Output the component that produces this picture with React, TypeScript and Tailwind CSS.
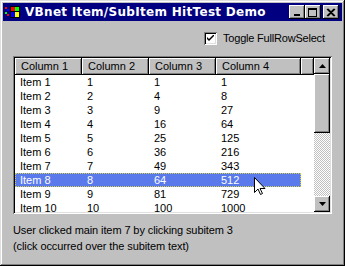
const ROWS = Array.from({ length: 10 }, (_, i) => {
  const n = i + 1
  return [`Item ${n}`, String(n), String(n * n), String(n * n * n)]
})

const COLS = ['Column 1', 'Column 2', 'Column 3', 'Column 4']
const COL_W = ['w-[67px]', 'w-[67px]', 'w-[67px]', 'w-[85px]']

const RAISED =
  'shadow-[inset_-1px_-1px_0_#000,inset_1px_1px_0_#fff,inset_-2px_-2px_0_#808080]'

function TitleIcon() {
  return (
    <svg width="16" height="14" viewBox="0 0 16 14" className="shrink-0">
      <rect x="0" y="2" width="2" height="2" fill="#ff0000" />
      <rect x="2" y="4" width="2" height="2" fill="#0000ff" />
      <rect x="0" y="7" width="2" height="2" fill="#00ff00" />
      <rect x="2" y="9" width="2" height="2" fill="#ff0000" />
      <rect x="5" y="1" width="10" height="12" fill="#000" />
      <rect x="6" y="2" width="4" height="4" fill="#ff0000" />
      <rect x="10" y="2" width="4" height="4" fill="#00ff00" />
      <rect x="6" y="7" width="4" height="5" fill="#0000ff" />
      <rect x="10" y="7" width="4" height="5" fill="#ffff00" />
    </svg>
  )
}

function TitleButton({ kind }: { kind: 'min' | 'max' | 'close' }) {
  return (
    <div className={`w-[16px] h-[14px] bg-[#c0c0c0] ${RAISED} flex items-center justify-center`}>
      <svg width="10" height="9" viewBox="0 0 10 9">
        {kind === 'min' && <rect x="2" y="6" width="6" height="2" fill="#000" />}
        {kind === 'max' && (
          <>
            <rect x="0.5" y="0.5" width="8" height="8" fill="none" stroke="#000" />
            <rect x="0" y="0" width="9" height="2" fill="#000" />
          </>
        )}
        {kind === 'close' && (
          <path d="M1 1 L8 8 M2 1 L9 8 M8 1 L1 8 M9 1 L2 8" stroke="#000" strokeWidth="1.1" />
        )}
      </svg>
    </div>
  )
}

function ScrollButton({ up }: { up: boolean }) {
  return (
    <div className={`w-[16px] h-[16px] bg-[#c0c0c0] ${RAISED} flex items-center justify-center`}>
      <svg width="7" height="4" viewBox="0 0 7 4">
        {up ? <path d="M3.5 0 L7 4 L0 4 Z" fill="#000" /> : <path d="M0 0 L7 0 L3.5 4 Z" fill="#000" />}
      </svg>
    </div>
  )
}

function Cursor() {
  return (
    <svg
      width="12"
      height="19"
      viewBox="0 0 12 19"
      className="absolute left-[254px] top-[177px] pointer-events-none"
    >
      <path
        d="M0.5 0.5 L0.5 15.5 L4 12 L6.5 17.5 L8.5 16.5 L6 11.5 L11 11.5 Z"
        fill="#fff"
        stroke="#000"
        strokeWidth="1"
      />
    </svg>
  )
}

export default function App() {
  return (
    <div
      className="relative w-[345px] h-[266px] bg-[#c0c0c0] p-[3px] flex flex-col shadow-[inset_-1px_-1px_0_#000,inset_1px_1px_0_#dfdfdf,inset_-2px_-2px_0_#808080,inset_2px_2px_0_#fff] text-black"
      style={{ fontFamily: '"Liberation Sans", Arial, sans-serif' }}
    >
      <div className="h-[18px] bg-[#000080] flex items-center pl-[2px] pr-[3px]">
        <TitleIcon />
        <span
          className="ml-[4px] text-white font-bold text-[12px] leading-none tracking-[0.3px]"
          style={{ fontFamily: '"DejaVu Sans", Verdana, sans-serif' }}
        >
          VBnet Item/SubItem HitTest Demo
        </span>
        <div className="ml-auto flex items-center">
          <TitleButton kind="min" />
          <TitleButton kind="max" />
          <div className="w-[2px]" />
          <TitleButton kind="close" />
        </div>
      </div>

      <div className="flex-1 flex flex-col pl-[10px]">
        <label className="mt-[11px] ml-[191px] flex items-center h-[13px] text-[11px]">
          <div className="w-[13px] h-[13px] bg-white shadow-[inset_1px_1px_0_#808080,inset_-1px_-1px_0_#fff,inset_2px_2px_0_#000,inset_-2px_-2px_0_#dfdfdf] flex items-center justify-center">
            <svg width="7" height="7" viewBox="0 0 7 7">
              <path d="M0 2 L0 4 L2 6 L7 1 L7 -1 L2 4 Z" fill="#000" />
            </svg>
          </div>
          <span className="ml-[6px] tracking-[-0.2px]">Toggle FullRowSelect</span>
        </label>

        <div className="mt-[11px] w-[319px] h-[158px] p-[2px] bg-white shadow-[inset_1px_1px_0_#808080,inset_-1px_-1px_0_#fff,inset_2px_2px_0_#000,inset_-2px_-2px_0_#dfdfdf] flex">
          <div className="w-[299px] h-full overflow-hidden text-[11px]">
            <div className="flex h-[17px]">
              {COLS.map((c, i) => (
                <div
                  key={c}
                  className={`${COL_W[i]} bg-[#c0c0c0] ${RAISED} pl-[6px] flex items-center leading-none`}
                >
                  {c}
                </div>
              ))}
              <div className={`flex-1 bg-[#c0c0c0] ${RAISED}`} />
            </div>
            {ROWS.map((r, ri) => {
              const sel = ri === 7
              return (
                <div key={ri} className="flex h-[14px] items-center leading-none">
                  <div
                    className={`flex w-[286px] h-full items-center ${
                      sel ? 'bg-[#5a7aec] text-white outline-1 outline-dotted outline-[#d0d040] -outline-offset-1' : ''
                    }`}
                  >
                    {r.map((v, ci) => (
                      <div key={ci} className={`${COL_W[ci]} pl-[5px]`}>
                        {v}
                      </div>
                    ))}
                  </div>
                </div>
              )
            })}
          </div>
          <div className="w-[16px] h-full flex flex-col">
            <ScrollButton up />
            <div className={`h-[59px] bg-[#c0c0c0] ${RAISED}`} />
            <div className="flex-1 bg-[repeating-conic-gradient(#c0c0c0_0_25%,#fff_0_50%)] bg-[length:2px_2px]" />
            <ScrollButton up={false} />
          </div>
        </div>

        <div className="mt-[8px] text-[11px] leading-[16px] tracking-[-0.1px]">
          <div>User clicked main item 7 by clicking subitem 3</div>
          <div>(click occurred over the subitem text)</div>
        </div>
      </div>

      <Cursor />
    </div>
  )
}
